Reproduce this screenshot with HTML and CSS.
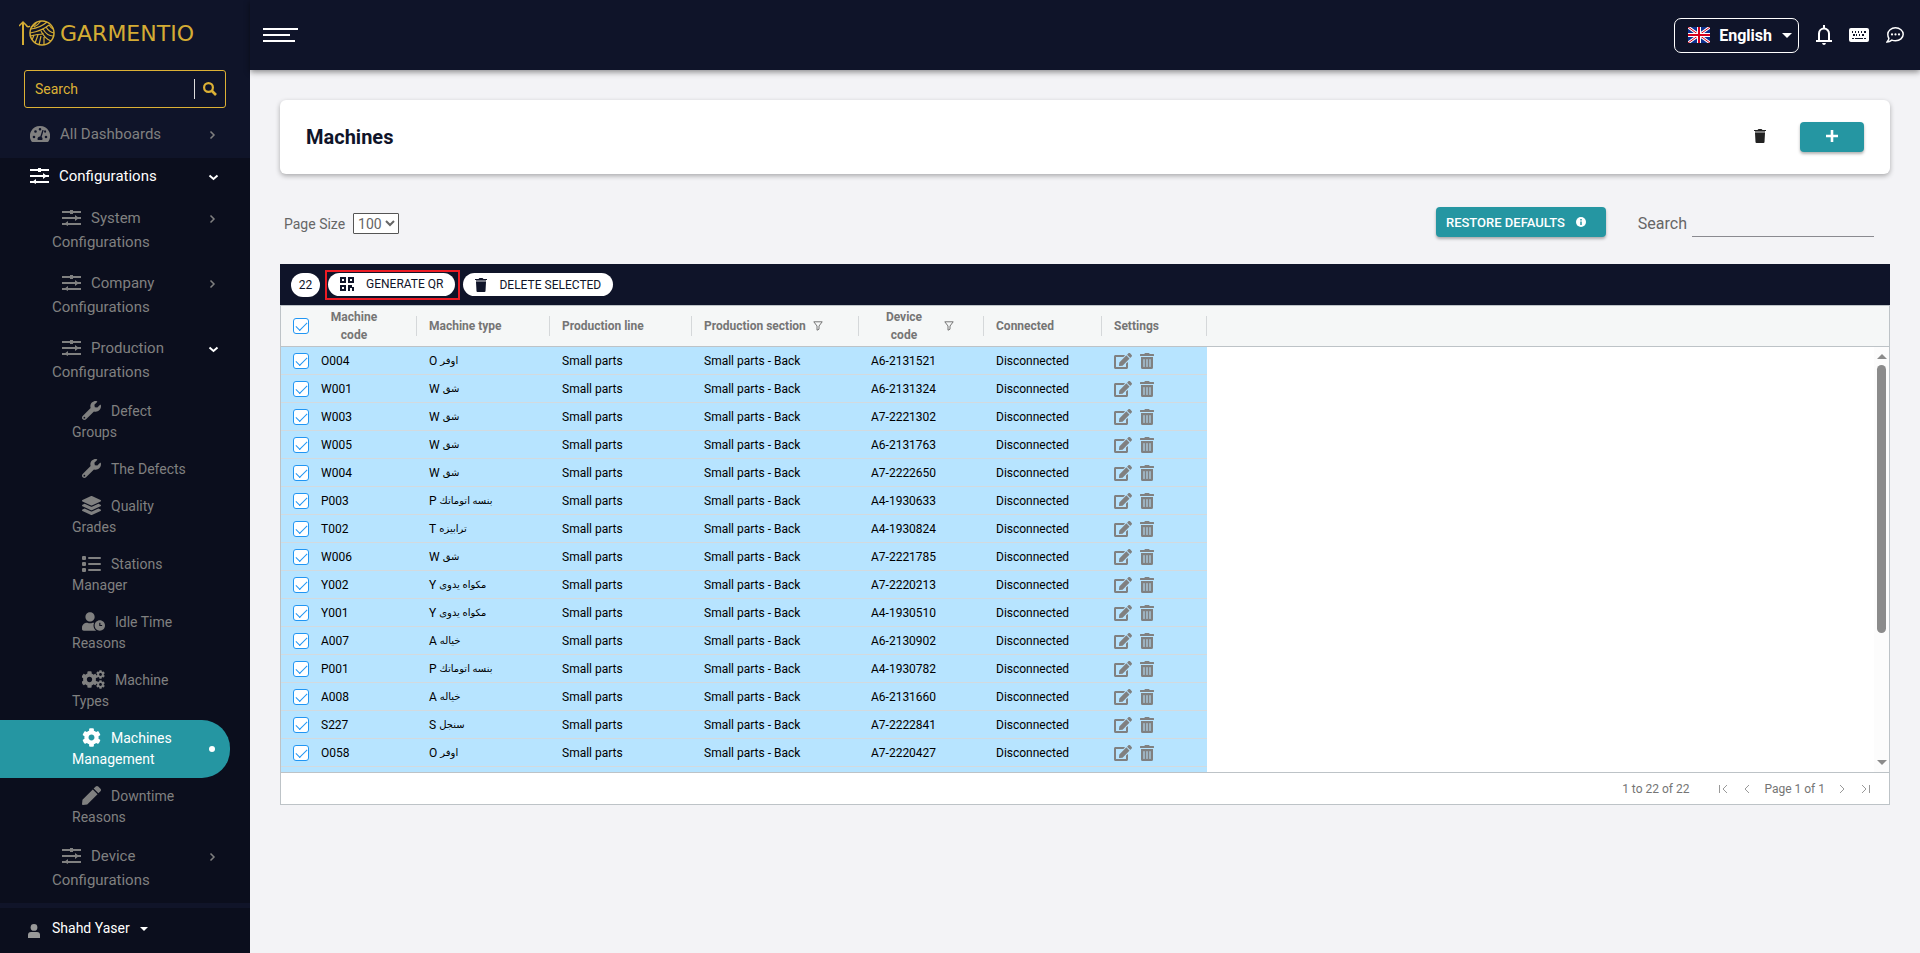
FILE: index.html
```html
<!DOCTYPE html>
<html lang="en">
<head>
  <meta charset="UTF-8" />
  <meta name="viewport" content="width=device-width, initial-scale=1.0"/>
  <title>Garmentio - Machines</title>
  <link rel="stylesheet" href="styles.css">
</head>
<body>

  <!-- Icon sprite -->
  <svg class="sprite" aria-hidden="true">
    <symbol id="i-sliders" viewBox="0 0 19 16">
      <path d="M0 2h19M0 8h19M0 14h19" fill="none" stroke="currentColor" stroke-width="2"/>
      <path d="M8 0h3v4H8zM13 5l4 3-4 3zM6 11v5l-4-2z"/>
    </symbol>
    <symbol id="i-gauge" viewBox="0 0 20 16">
      <path fill-rule="evenodd" d="M10 0A10 10 0 0 0 1.4 15.2c.2.5.6.8 1.1.8h15c.5 0 .9-.3 1.1-.8A10 10 0 0 0 10 0zM4 12.300a1.300 1.300 0 1 1 0-2.600 1.300 1.300 0 0 1 0 2.600zM5.500 6.800a1.300 1.300 0 1 1 0-2.600 1.300 1.300 0 0 1 0 2.600zM10 4.500a1.300 1.300 0 1 1 0-2.600 1.300 1.300 0 0 1 0 2.600zM13.700 4.300 11.600 11a2.500 2.500 0 0 1 .6 3H7.800a2.500 2.500 0 0 1 2.500-3.600l2.100-6.500zM15 6.800a1.200 1.200 0 0 1-.7-1.800l.3-.8A1.300 1.300 0 1 1 15 6.800zM16 12.300a1.300 1.300 0 1 1 0-2.600 1.300 1.300 0 0 1 0 2.600z"/>
    </symbol>
    <symbol id="i-wrench" viewBox="0 0 512 512">
      <path d="M507.73 109.1c-2.24-9.03-13.54-12.09-20.12-5.51l-74.36 74.36-67.88-11.31-11.31-67.88 74.36-74.36c6.62-6.62 3.43-17.9-5.66-20.16-47.38-11.74-99.55.91-136.58 37.93-39.64 39.64-50.55 97.1-34.05 147.2L18.74 402.76c-24.99 24.99-24.99 65.51 0 90.5 24.99 24.99 65.51 24.99 90.5 0l213.21-213.21c50.12 16.71 107.47 5.68 147.37-34.22 37.07-37.07 49.7-89.32 37.91-136.73zM64 472c-13.25 0-24-10.75-24-24 0-13.26 10.75-24 24-24s24 10.74 24 24c0 13.25-10.75 24-24 24z"/>
    </symbol>
    <symbol id="i-layers" viewBox="0 0 512 512">
      <path d="M12.41 148.02l232.94 105.67c6.8 3.09 14.49 3.09 21.29 0l232.94-105.67c16.55-7.51 16.55-32.52 0-40.03L266.65 2.31a25.607 25.607 0 0 0-21.29 0L12.41 107.98c-16.55 7.51-16.55 32.53 0 40.04zm487.18 88.28l-58.09-26.33-161.64 73.27c-7.56 3.43-15.59 5.17-23.86 5.17s-16.29-1.74-23.86-5.17L70.51 209.97l-58.1 26.33c-16.55 7.5-16.55 32.5 0 40l232.94 105.59c6.8 3.08 14.49 3.08 21.29 0L499.59 276.3c16.55-7.5 16.55-32.5 0-40zm0 127.8l-57.87-26.23-161.86 73.37c-7.56 3.43-15.59 5.17-23.86 5.17s-16.29-1.74-23.86-5.17L70.29 337.87 12.41 364.1c-16.55 7.5-16.55 32.5 0 40l232.94 105.59c6.8 3.08 14.49 3.08 21.29 0L499.59 404.1c16.55-7.5 16.55-32.5 0-40z"/>
    </symbol>
    <symbol id="i-list" viewBox="0 0 19 19">
      <rect x="0" y="2" width="4" height="4" rx="1"/><rect x="0" y="8" width="4" height="4" rx="1"/><rect x="0" y="14" width="4" height="4" rx="1"/>
      <rect x="6" y="3" width="13" height="2" rx="1"/><rect x="6" y="9" width="13" height="2" rx="1"/><rect x="6" y="15" width="13" height="2" rx="1"/>
    </symbol>
    <symbol id="i-user-clock" viewBox="0 0 640 512">
      <path d="M496 224c-79.600 0-144 64.400-144 144s64.400 144 144 144 144-64.400 144-144-64.400-144-144-144zm64 150.300c0 5.300-4.400 9.700-9.700 9.700h-60.600c-5.300 0-9.700-4.400-9.700-9.700v-76.600c0-5.300 4.400-9.700 9.700-9.700h12.600c5.300 0 9.700 4.400 9.700 9.700V352h38.300c5.300 0 9.700 4.400 9.700 9.700v12.600zM320 368c0-27.800 6.700-54.100 18.200-77.500-8-1.500-16.200-2.500-24.600-2.500h-16.700c-22.200 10.200-46.900 16-72.900 16s-50.600-5.800-72.900-16h-16.700C60.200 288 0 348.200 0 422.400V464c0 26.500 21.500 48 48 48h347.100c-45.300-31.900-75.100-84.500-75.100-144zm-96-112c70.700 0 128-57.300 128-128S294.700 0 224 0 96 57.300 96 128s57.300 128 128 128z"/>
    </symbol>
    <symbol id="i-cog" viewBox="0 0 512 512">
      <path d="M487.4 315.7l-42.6-24.6c4.3-23.2 4.3-47 0-70.2l42.6-24.6c4.900-2.800 7.100-8.600 5.500-14-11.100-35.600-30-67.800-54.700-94.600-3.800-4.100-10-5.100-14.800-2.300L380.800 110c-17.900-15.400-38.500-27.300-60.800-35.100V25.800c0-5.600-3.900-10.500-9.400-11.700-36.700-8.200-74.300-7.800-109.200 0-5.500 1.200-9.400 6.100-9.400 11.700V75c-22.200 7.900-42.800 19.800-60.800 35.100L88.700 85.500c-4.900-2.800-11-1.900-14.800 2.300-24.700 26.700-43.600 58.900-54.700 94.600-1.700 5.400.6 11.200 5.500 14L67.300 221c-4.300 23.200-4.300 47 0 70.200l-42.600 24.600c-4.900 2.800-7.100 8.600-5.500 14 11.100 35.600 30 67.800 54.700 94.600 3.800 4.100 10 5.100 14.800 2.300l42.600-24.600c17.900 15.400 38.500 27.300 60.800 35.100v49.200c0 5.600 3.900 10.500 9.400 11.700 36.700 8.200 74.300 7.800 109.200 0 5.500-1.200 9.400-6.100 9.400-11.700v-49.200c22.200-7.900 42.800-19.800 60.800-35.100l42.600 24.600c4.900 2.800 11 1.900 14.800-2.300 24.700-26.700 43.600-58.900 54.700-94.600 1.500-5.500-.7-11.300-5.600-14.100zM256 336c-44.100 0-80-35.900-80-80s35.900-80 80-80 80 35.900 80 80-35.900 80-80 80z"/>
    </symbol>
    <symbol id="i-cogs" viewBox="0 0 23 19">
      <use href="#i-cog" x="-1" y="1" width="17" height="17"/>
      <use href="#i-cog" x="14" y="0" width="9" height="9"/>
      <use href="#i-cog" x="14" y="10" width="9" height="9"/>
    </symbol>
    <symbol id="i-pen" viewBox="0 0 512 512">
      <path d="M290.74 93.24l128.02 128.02-277.99 277.99-114.14 12.6C11.35 513.54-1.56 500.62.14 485.34l12.7-114.22 277.9-277.88zm207.2-19.06l-60.11-60.11c-18.75-18.75-49.16-18.75-67.91 0l-56.55 56.55 128.02 128.02 56.55-56.55c18.75-18.76 18.75-49.16 0-67.91z"/>
    </symbol>
    <symbol id="i-user" viewBox="0 0 12 14">
      <circle cx="6" cy="3.400" r="3.400"/><path d="M0 14v-3q0-3 3-3h6q3 0 3 3v3z"/>
    </symbol>
    <symbol id="i-right" viewBox="0 0 16 16"><path d="M5.500 4.500 9 8 5.500 11.500" fill="none" stroke="currentColor" stroke-width="1.500"/></symbol>
    <symbol id="i-down" viewBox="0 0 16 16"><path d="M4.500 6.500 8.500 10l4-3.500" fill="none" stroke="currentColor" stroke-width="2"/></symbol>
    <symbol id="i-search" viewBox="0 0 14 14"><circle cx="5.500" cy="5.500" r="4.400" fill="none" stroke="currentColor" stroke-width="2.200"/><path d="m9 9 4 4" stroke="currentColor" stroke-width="2.600"/></symbol>
    <symbol id="i-edit" viewBox="0 0 576 512">
      <path d="M402.6 83.2l90.2 90.2c3.8 3.8 3.8 10 0 13.8L274.4 405.6l-92.8 10.3c-12.4 1.4-22.9-9.1-21.5-21.5l10.3-92.8L388.8 83.2c3.8-3.8 10-3.8 13.8 0zm162-22.9l-48.8-48.8c-15.2-15.2-39.9-15.2-55.2 0l-35.4 35.4c-3.8 3.8-3.8 10 0 13.8l90.2 90.2c3.8 3.8 10 3.8 13.8 0l35.4-35.4c15.2-15.3 15.2-40 0-55.2zM384 346.2V448H64V128h229.8c3.2 0 6.2-1.3 8.5-3.5l40-40c7.6-7.6 2.2-20.5-8.5-20.5H48C21.5 64 0 85.5 0 112v352c0 26.5 21.5 48 48 48h352c26.5 0 48-21.5 48-48V306.2c0-10.7-12.9-16-20.5-8.5l-40 40c-2.2 2.3-3.5 5.3-3.5 8.5z"/>
    </symbol>
    <symbol id="i-trash-alt" viewBox="0 0 448 512">
      <path d="M32 464a48 48 0 0 0 48 48h288a48 48 0 0 0 48-48V128H32zm272-256a16 16 0 0 1 32 0v224a16 16 0 0 1-32 0zm-96 0a16 16 0 0 1 32 0v224a16 16 0 0 1-32 0zm-96 0a16 16 0 0 1 32 0v224a16 16 0 0 1-32 0zM432 32H312l-9.4-18.7A24 24 0 0 0 281.1 0H166.8a23.72 23.72 0 0 0-21.4 13.3L136 32H16A16 16 0 0 0 0 48v32a16 16 0 0 0 16 16h416a16 16 0 0 0 16-16V48a16 16 0 0 0-16-16z"/>
    </symbol>
    <symbol id="i-trash" viewBox="0 0 12 14">
      <path d="M0 1h3.500L4.500 0h3l1 1H12v1H0z"/><path d="M1 2h10v2H1z" opacity=".6"/><path d="M1 4h10l-.5 9q0 1-1 1h-7q-1 0-1-1z"/>
    </symbol>
    <symbol id="i-qr" viewBox="0 0 14 14">
      <path fill-rule="evenodd" d="M0 0h6v6H0zM2 2v2h2V2zM8 0h6v6H8zM10 2v2h2V2zM0 8h6v6H0zM2 10v2h2v-2zM8 8h4v2h2v2h-2v-1h-2v3H8zM12 12h2v2h-2z"/>
    </symbol>
    <symbol id="i-funnel" viewBox="0 0 10 10"><path d="M.8.800h8.400L6 5v3.200L4 9.200V5z" fill="none" stroke="currentColor"/></symbol>
  </svg>

  <div class="layout">

    <aside class="sidebar">
      <a class="logo" href="#" aria-label="Garmentio home">
        <svg class="logo-mark" viewBox="0 0 36 26" aria-hidden="true">
          <g fill="none" stroke="#d4ac34">
            <path d="M4 2v23" stroke-width="2"/>
            <path d="M0 6l4-4 3 3q2 3 4 1" stroke-width="1.500"/>
            <circle cx="23" cy="13" r="12" stroke-width="1.500"/>
            <path d="M12 9q9-1 16-7M11 13q12-2 19-8M18 2q-2 3-5 5M22 1q-3 4-7 6M24 9q4 7 10 7M27 7q3 5 8 6M30 5q2 3 4 4M22 11q4 8 10 10M11 16q8-2 14-2M13 20l2-5M16 23l3-8M20 25l2-9M25 25l0-8" stroke-width="1.200"/>
          </g>
        </svg>
        <span>GARMENTIO</span>
      </a>

      <form class="side-search">
        <input type="text" placeholder="Search" aria-label="Search menu">
        <button type="button" aria-label="Search"><svg width="14" height="14"><use href="#i-search"/></svg></button>
      </form>

      <nav class="menu">
        <a class="item item-top" href="#">
          <span class="label"><svg width="20" height="16"><use href="#i-gauge"/></svg>All Dashboards</span>
          <svg class="arrow" width="16" height="16"><use href="#i-right"/></svg>
        </a>

        <div class="group">
          <a class="item item-open" href="#">
            <span class="label"><svg width="19" height="16"><use href="#i-sliders"/></svg>Configurations</span>
            <svg class="arrow" width="16" height="16"><use href="#i-down"/></svg>
          </a>
          <a class="item sub" href="#">
            <span class="label"><svg width="19" height="16"><use href="#i-sliders"/></svg>System Configurations</span>
            <svg class="arrow" width="16" height="16"><use href="#i-right"/></svg>
          </a>
          <a class="item sub" href="#">
            <span class="label"><svg width="19" height="16"><use href="#i-sliders"/></svg>Company Configurations</span>
            <svg class="arrow" width="16" height="16"><use href="#i-right"/></svg>
          </a>
          <a class="item sub" href="#">
            <span class="label"><svg width="19" height="16"><use href="#i-sliders"/></svg>Production Configurations</span>
            <svg class="arrow white" width="16" height="16"><use href="#i-down"/></svg>
          </a>
          <a class="item leaf" href="#"><span class="label"><svg width="19" height="19"><use href="#i-wrench"/></svg>Defect Groups</span></a>
          <a class="item leaf" href="#"><span class="label"><svg width="19" height="19"><use href="#i-wrench"/></svg>The Defects</span></a>
          <a class="item leaf" href="#"><span class="label"><svg width="19" height="19"><use href="#i-layers"/></svg>Quality Grades</span></a>
          <a class="item leaf" href="#"><span class="label"><svg width="19" height="19"><use href="#i-list"/></svg>Stations Manager</span></a>
          <a class="item leaf" href="#"><span class="label"><svg width="23" height="19"><use href="#i-user-clock"/></svg>Idle Time Reasons</span></a>
          <a class="item leaf" href="#"><span class="label"><svg width="23" height="19"><use href="#i-cogs"/></svg>Machine Types</span></a>
          <a class="item leaf active" href="#"><span class="label"><svg width="19" height="19"><use href="#i-cog"/></svg>Machines Management</span></a>
          <a class="item leaf" href="#"><span class="label"><svg width="19" height="19"><use href="#i-pen"/></svg>Downtime Reasons</span></a>
          <a class="item sub" href="#">
            <span class="label"><svg width="19" height="16"><use href="#i-sliders"/></svg>Device Configurations</span>
            <svg class="arrow" width="16" height="16"><use href="#i-right"/></svg>
          </a>
        </div>
      </nav>

      <button class="profile" type="button">
        <svg width="12" height="14"><use href="#i-user"/></svg>
        <span>Shahd Yaser</span>
        <i class="caret small"></i>
      </button>
    </aside>

    <div class="page">
      <header class="topbar">
        <button class="burger" type="button" aria-label="Toggle menu"><i></i><i></i><i></i></button>
        <div class="top-actions">
          <button class="lang" type="button">
            <svg width="22" height="16" viewBox="0 0 22 16">
              <path fill="#0b2f8f" d="M0 0h22v16H0z"/>
              <path d="M0 0l22 16M22 0L0 16" stroke="#fff" stroke-width="3"/>
              <path d="M0 0l22 16M22 0L0 16" stroke="#d5001c" stroke-width="1"/>
              <path d="M11 0v16M0 8h22" stroke="#fff" stroke-width="4"/>
              <path d="M11 0v16M0 8h22" stroke="#d5001c" stroke-width="2"/>
            </svg>
            <span>English</span>
            <i class="caret"></i>
          </button>
          <button class="icon-btn" type="button" aria-label="Notifications">
            <svg width="16" height="20" viewBox="0 0 16 20">
              <path d="M3 15V8.500a5 5 0 0 1 10 0V15" fill="none" stroke="currentColor" stroke-width="2"/>
              <path d="M0 15h16v2H0zM6 18h4q-.5 2-2 2t-2-2zM7 0h2v4H7z"/>
            </svg>
          </button>
          <button class="icon-btn" type="button" aria-label="Keyboard">
            <svg width="20" height="14" viewBox="0 0 20 14">
              <path fill-rule="evenodd" d="M2 0h16q2 0 2 2v10q0 2-2 2H2q-2 0-2-2V2q0-2 2-2zM3 3v2h1V3zM6 3v2h1V3zM9 3v2h1V3zM12 3v2h1V3zM15 3v2h2V3zM4 6v2h2V6zM7 6v2h1V6zM10 6v2h1V6zM13 6v2h2V6zM3 10v1h2v-1zM6 10v1h8v-1zM15 10v1h2v-1z"/>
            </svg>
          </button>
          <button class="icon-btn" type="button" aria-label="Messages">
            <svg width="18" height="16" viewBox="0 0 18 16">
              <path d="M9.500.8c4.300 0 7.700 2.900 7.700 6.500s-3.400 6.500-7.700 6.500q-2 0-3.600-.7Q3.500 15 1 15q1.800-1.900 1.900-3.700Q1.800 9.500 1.800 7.300C1.800 3.700 5.200.8 9.500.8z" fill="none" stroke="currentColor" stroke-width="1.500"/>
              <circle cx="6" cy="7.400" r="1.100"/><circle cx="9.500" cy="7.400" r="1.100"/><circle cx="13" cy="7.400" r="1.100"/>
            </svg>
          </button>
        </div>
      </header>

      <main class="content">
        <section class="title-card">
          <h1>Machines</h1>
          <button class="trash-btn" type="button" aria-label="Deleted machines"><svg width="12" height="14"><use href="#i-trash"/></svg></button>
          <button class="btn btn-add" type="button" aria-label="Add machine">
            <svg width="12" height="12" viewBox="0 0 12 12"><path d="M6 0v12M0 6h12" stroke="currentColor" stroke-width="2.600"/></svg>
          </button>
        </section>

        <div class="tools">
          <label for="pageSize">Page Size</label>
          <select id="pageSize"><option>100</option></select>
          <button class="btn btn-restore" type="button">
            RESTORE DEFAULTS
            <svg width="10" height="10" viewBox="0 0 10 10"><circle cx="5" cy="5" r="5"/><path d="M5 2v1.500M5 4.500V8" stroke="#2596a2" stroke-width="1.500"/></svg>
          </button>
          <label class="search-label" for="gridSearch">Search</label>
          <input id="gridSearch" class="grid-search" type="text">
        </div>

        <div class="bulk-bar">
          <span class="count">22</span>
          <div class="highlight">
            <button class="pill" type="button"><svg width="14" height="14"><use href="#i-qr"/></svg>GENERATE QR</button>
          </div>
          <button class="pill" type="button"><svg width="12" height="14"><use href="#i-trash"/></svg>DELETE SELECTED</button>
        </div>

        <div class="grid">
          <div class="grid-body">
            <table class="machines">
              <colgroup>
                <col class="c-code"><col class="c-type"><col class="c-line"><col class="c-section"><col class="c-device"><col class="c-conn"><col class="c-set"><col>
              </colgroup>
              <thead>
                <tr>
                  <th><div class="cell"><input type="checkbox" checked aria-label="Select all"><span class="wrap">Machine code</span></div></th>
                  <th><div class="cell">Machine type</div></th>
                  <th><div class="cell">Production line</div></th>
                  <th><div class="cell">Production section<svg width="10" height="10"><use href="#i-funnel"/></svg></div></th>
                  <th><div class="cell"><span class="wrap">Device code</span><svg width="10" height="10"><use href="#i-funnel"/></svg></div></th>
                  <th><div class="cell">Connected</div></th>
                  <th><div class="cell">Settings</div></th>
                  <td></td>
                </tr>
              </thead>
              <tbody id="rows"></tbody>
            </table>
          </div>
          <div class="scrollbar"><i class="up"></i><i class="thumb"></i><i class="down"></i></div>
          <div class="pager">
            <span class="range">1 to 22 of 22</span>
            <button type="button" aria-label="First page"><svg width="12" height="10" viewBox="0 0 12 10"><path d="M1.500 1v8M9 1 5 5l4 4"/></svg></button>
            <button type="button" aria-label="Previous page"><svg width="12" height="10" viewBox="0 0 12 10"><path d="M8 1 4 5l4 4"/></svg></button>
            <span>Page 1 of 1</span>
            <button type="button" aria-label="Next page"><svg width="12" height="10" viewBox="0 0 12 10"><path d="m4 1 4 4-4 4"/></svg></button>
            <button type="button" aria-label="Last page"><svg width="12" height="10" viewBox="0 0 12 10"><path d="m3 1 4 4-4 4M10.500 1v8"/></svg></button>
          </div>
        </div>
      </main>
    </div>
  </div>

  <script src="script.js"></script>
</body>
</html>
```
FILE: styles.css
```css
* {
  box-sizing: border-box;
}

body, html {
  margin: 0;
  padding: 0;
  height: 100%;
  font-family: Roboto, 'DejaVu Sans', sans-serif;
  font-size: 14px;
  background: #f3f3f6;
  overflow: hidden;
}

button, input, select {
  font-family: inherit;
}

button {
  border: none;
  background: none;
  padding: 0;
  cursor: pointer;
}

a {
  text-decoration: none;
  color: inherit;
}

svg {
  fill: currentColor;
  flex-shrink: 0;
}

.sprite {
  position: absolute;
  width: 0;
  height: 0;
}

.layout {
  display: flex;
  height: 100%;
}

/* Sidebar */
.sidebar {
  width: 250px;
  flex-shrink: 0;
  display: flex;
  flex-direction: column;
  background: #0f1429;
  color: #808080;
}

.logo {
  height: 70px;
  display: flex;
  align-items: center;
  gap: 5px;
  padding: 0 0 4px 19px;
  font-family: 'DejaVu Sans', sans-serif;
  font-size: 22px;
  color: #d4ac34;
}

.logo-mark {
  width: 36px;
  height: 26px;
}

.side-search {
  display: flex;
  align-items: center;
  height: 38px;
  margin: 0 24px;
  border: 1px solid #dcb135;
  border-radius: 3px;
}

.side-search input {
  flex: 1;
  min-width: 0;
  height: 20px;
  padding: 0 10px;
  border: none;
  border-right: 1px solid #ddd;
  outline: none;
  background: none;
  font-size: 14px;
  color: #dcb135;
}

.side-search input::placeholder {
  color: #dcb135;
}

.side-search button {
  width: 30px;
  height: 14px;
  color: #dcb135;
}

.side-search svg {
  display: block;
  margin: 0 auto;
}

.menu {
  flex: 1;
  min-height: 0;
  display: flex;
  flex-direction: column;
  overflow: hidden;
}

.group {
  flex: 1;
  background: #0b0e1d;
}

.item {
  display: flex;
  align-items: flex-start;
  padding: 8px 29px 9px 52px;
  font-size: 15px;
  line-height: 24px;
}

.label {
  flex: 1;
}

.label svg {
  margin: -3px 10px 0;
  vertical-align: middle;
}

.arrow {
  margin-top: 5px;
}

.white {
  color: #fff;
}

.item-top,
.item-open {
  padding: 14px 29px 12px 20px;
}

.item-open {
  padding-top: 6px;
  padding-bottom: 10px;
  color: #fff;
}

.leaf {
  padding: 8px 60px 8px 72px;
  font-size: 14px;
  line-height: 21px;
}

.leaf svg {
  margin-top: -4px;
  margin-bottom: -1px;
}

.active {
  position: relative;
  margin-right: 20px;
  padding-right: 40px;
  border-radius: 0 28px 28px 0;
  background: #2596a2;
  color: #fff;
}

.active::after {
  content: "";
  position: absolute;
  top: 26px;
  right: 15px;
  width: 6px;
  height: 6px;
  border-radius: 50%;
  background: #fff;
}

.profile {
  display: flex;
  align-items: center;
  height: 50px;
  padding: 0 28px 6px;
  border-top: 5px solid #101429;
  background: #0b0e1d;
  color: #fff;
  font-size: 14px;
}

.profile svg {
  margin: 6px 12px 0 0;
  color: #999;
}

.caret {
  margin-left: 10px;
  border: 5px solid transparent;
  border-top-color: currentColor;
  border-bottom: none;
}

.caret.small {
  border-width: 4px;
  border-bottom: none;
  margin-top: 2px;
}

/* Top bar */
.page {
  flex: 1;
  min-width: 0;
}

.topbar {
  position: relative;
  display: flex;
  align-items: center;
  justify-content: space-between;
  height: 70px;
  padding: 0 16px 0 13px;
  background: #0f1429;
  box-shadow: 0 2px 6px rgba(0,0,0,0.45);
  color: #fff;
}

.burger {
  display: flex;
  flex-direction: column;
  gap: 4px;
  width: 35px;
}

.burger i {
  width: 35px;
  height: 2px;
  background: #fff;
}

.burger i:nth-child(2) {
  width: 27px;
}

.burger i:nth-child(3) {
  width: 32px;
}

.top-actions {
  display: flex;
  align-items: center;
  gap: 17px;
}

.lang {
  display: flex;
  align-items: center;
  height: 35px;
  padding: 0 6px 0 13px;
  border: 1px solid #fff;
  border-radius: 7px;
  color: #fff;
  font-size: 16px;
  font-weight: 700;
}

.lang span {
  margin-left: 9px;
}

.icon-btn {
  color: #fff;
}

.icon-btn svg {
  display: block;
}

/* Content */
.content {
  padding: 30px;
}

.title-card {
  display: flex;
  align-items: center;
  height: 74px;
  padding: 0 26px;
  border-radius: 6px;
  background: #fff;
  box-shadow: 0 2px 5px rgba(0,0,0,0.3);
}

.title-card h1 {
  flex: 1;
  margin: 0;
  font-size: 20px;
  font-weight: 700;
  color: #0f1429;
}

.trash-btn {
  margin-right: 34px;
  color: #222;
}

.btn {
  height: 30px;
  border-radius: 4px;
  background: #2596a2;
  box-shadow: 0 2px 3px rgba(0,0,0,0.3);
  color: #fff;
}

.btn-add {
  width: 64px;
}

.tools {
  display: flex;
  align-items: center;
  margin: 33px 16px 27px 4px;
  color: #666;
}

.tools label,
.tools select {
  margin-top: 3px;
}

.tools select {
  height: 21px;
  margin-left: 8px;
  border: 1px solid #555;
  border-radius: 1px;
  background: #fff;
  color: #666;
  font-size: 14px;
}

.btn-restore {
  display: flex;
  align-items: center;
  gap: 11px;
  margin-left: auto;
  padding: 0 20px 0 10px;
  font-size: 13px;
  font-weight: 500;
}

.tools .search-label {
  margin-left: 32px;
  font-size: 16px;
}

.grid-search {
  width: 182px;
  height: 29px;
  margin-left: 5px;
  border: none;
  border-bottom: 1px solid #8a8a90;
  outline: none;
  background: none;
}

/* Bulk actions */
.bulk-bar {
  display: flex;
  align-items: center;
  height: 41px;
  padding-left: 11px;
  background: #0f1429;
  color: #0f1429;
}

.count {
  width: 29px;
  margin-right: 5px;
  border-radius: 12px;
  background: #fff;
  font-size: 12px;
  line-height: 24px;
  text-align: center;
}

.highlight {
  margin-right: 3px;
  padding: 1px 3px 2px 1px;
  border: 2px solid #ed1c24;
}

.pill {
  display: flex;
  align-items: center;
  gap: 12px;
  height: 23px;
  padding: 0 12px;
  border-radius: 12px;
  background: #fff;
  color: #0f1429;
  font-size: 12px;
}

/* Grid */
.grid {
  position: relative;
  border: 1px solid #bdc3c7;
  background: #fff;
}

.grid-body {
  height: 466px;
  overflow-y: auto;
  scrollbar-width: none;
}

.machines {
  width: 100%;
  table-layout: fixed;
  border-collapse: separate;
  border-spacing: 0;
  font-size: 12px;
}

.c-code { width: 136px; }
.c-type { width: 133px; }
.c-line { width: 142px; }
.c-section { width: 167px; }
.c-device { width: 125px; }
.c-conn { width: 118px; }
.c-set { width: 105px; }

.machines th,
.machines td {
  padding: 0;
  text-align: left;
  white-space: nowrap;
}

.machines thead th,
.machines thead td {
  position: sticky;
  top: 0;
  height: 41px;
  border-bottom: 1px solid #bdc3c7;
  background: #f5f7f7;
  color: #757575;
  font-weight: 700;
  line-height: 18px;
}

.machines thead th::after {
  content: "";
  position: absolute;
  top: 10px;
  right: 0;
  width: 1px;
  height: 20px;
  background: #d5d8da;
}

.cell {
  display: flex;
  align-items: center;
  padding-left: 12px;
}

/* the arabic fallback face runs large next to Roboto */
.cell bdi {
  margin-left: 3px;
  font-size: 10px;
}

.cell input {
  margin-right: 12px;
}

.cell svg {
  margin-left: 7px;
}

.wrap {
  width: 66px;
  padding: 0 8px;
  white-space: normal;
  text-align: center;
}

.machines tbody td {
  height: 28px;
  border-bottom: 1px solid #d3dade;
  background: #b7e4ff;
  color: #000;
}

.machines tbody td:last-child {
  border: none;
  background: #fff;
}

.machines input {
  appearance: none;
  width: 16px;
  height: 16px;
  flex-shrink: 0;
  margin-top: 0;
  margin-bottom: 0;
  margin-left: 0;
  border: 1px solid #2196f3;
  border-radius: 3px;
  background: #fff;
}

.machines input:checked::before {
  content: "";
  display: block;
  width: 10px;
  height: 5px;
  margin: 3px 0 0 2px;
  border: solid #2196f3;
  border-width: 0 0 1px 1px;
  transform: rotate(-45deg);
}

.row-btn {
  height: 16px;
  margin-right: 8px;
  color: #808080;
}

.row-btn svg {
  display: block;
  margin: 0;
}

.scrollbar {
  position: absolute;
  top: 41px;
  right: 0;
  width: 15px;
  height: 425px;
  padding: 7px 3px;
  display: flex;
  flex-direction: column;
  align-items: center;
  background: #fcfcfc;
}

.scrollbar .up,
.scrollbar .down {
  border: 5px solid transparent;
}

.scrollbar .up {
  border-top: none;
  border-bottom-color: #8b8b8b;
}

.scrollbar .down {
  margin-top: auto;
  border-bottom: none;
  border-top-color: #8b8b8b;
}

.thumb {
  width: 9px;
  height: 268px;
  margin-top: 6px;
  border-radius: 5px;
  background: #8b8b8b;
}

.pager {
  display: flex;
  align-items: center;
  justify-content: flex-end;
  gap: 11px;
  height: 32px;
  padding-right: 18px;
  border-top: 1px solid #bdc3c7;
  color: #757575;
  font-size: 12px;
}

.range {
  margin-right: 18px;
}

.pager button {
  height: 10px;
  color: #999;
}

.pager svg {
  display: block;
  fill: none;
  stroke: currentColor;
}
```
FILE: script.js
```js
const machines = [
  ['O004', 'O', 'اوفر', 'A6-2131521'],
  ['W001', 'W', 'شق', 'A6-2131324'],
  ['W003', 'W', 'شق', 'A7-2221302'],
  ['W005', 'W', 'شق', 'A6-2131763'],
  ['W004', 'W', 'شق', 'A7-2222650'],
  ['P003', 'P', 'بنسه اتوماتك', 'A4-1930633'],
  ['T002', 'T', 'ترابيزه', 'A4-1930824'],
  ['W006', 'W', 'شق', 'A7-2221785'],
  ['Y002', 'Y', 'مكواه يدوى', 'A7-2220213'],
  ['Y001', 'Y', 'مكواه يدوى', 'A4-1930510'],
  ['A007', 'A', 'خياله', 'A6-2130902'],
  ['P001', 'P', 'بنسه اتوماتك', 'A4-1930782'],
  ['A008', 'A', 'خياله', 'A6-2131660'],
  ['S227', 'S', 'سنجل', 'A7-2222841'],
  ['O058', 'O', 'اوفر', 'A7-2220427']
];

const rows = document.getElementById('rows');

machines.forEach(([code, letter, type, device]) => {
  const tr = document.createElement('tr');
  tr.innerHTML = `
    <td><div class="cell"><input type="checkbox" checked aria-label="Select ${code}">${code}</div></td>
    <td><div class="cell">${letter} <bdi>${type}</bdi></div></td>
    <td><div class="cell">Small parts</div></td>
    <td><div class="cell">Small parts - Back</div></td>
    <td><div class="cell">${device}</div></td>
    <td><div class="cell">Disconnected</div></td>
    <td><div class="cell">
      <button class="row-btn" type="button" aria-label="Edit ${code}"><svg width="18" height="16"><use href="#i-edit"/></svg></button>
      <button class="row-btn" type="button" aria-label="Delete ${code}"><svg width="14" height="16"><use href="#i-trash-alt"/></svg></button>
    </div></td>
    <td></td>`;
  rows.appendChild(tr);
});

const spacer = document.createElement('tr');
spacer.innerHTML = '<td></td>'.repeat(8);
rows.appendChild(spacer);
```
